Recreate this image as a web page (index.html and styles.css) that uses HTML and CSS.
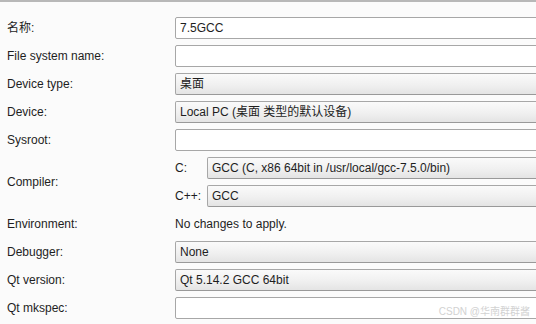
FILE: index.html
```html
<!DOCTYPE html>
<html lang="zh-cmn-Hans">
    <head>
        <meta charset="UTF-8">
        <title>Kit</title>
        <link rel="stylesheet" href="styles.css">
    </head>
    <body>
        <div class="panel">
            <div class="form">
                <div class="label">名称:</div>
                <div class="field edit">7.5GCC</div>

                <div class="label">File system name:</div>
                <div class="field edit"></div>

                <div class="label">Device type:</div>
                <div class="field combo">桌面</div>

                <div class="label">Device:</div>
                <div class="field combo">Local PC (桌面 类型的默认设备)</div>

                <div class="label">Sysroot:</div>
                <div class="field edit"></div>

                <div class="label compiler-label">Compiler:</div>
                <div class="compiler">
                    <div class="sub-label">C:</div>
                    <div class="field combo">GCC (C, x86 64bit in /usr/local/gcc-7.5.0/bin)</div>
                    <div class="sub-label">C++:</div>
                    <div class="field combo">GCC</div>
                </div>

                <div class="label">Environment:</div>
                <div class="plain">No changes to apply.</div>

                <div class="label">Debugger:</div>
                <div class="field combo">None</div>

                <div class="label">Qt version:</div>
                <div class="field combo">Qt 5.14.2 GCC 64bit</div>

                <div class="label">Qt mkspec:</div>
                <div class="field edit"></div>
            </div>
            <div class="watermark">CSDN @华南群群酱</div>
        </div>
    </body>
</html>
```

FILE: styles.css
```css
* {
    margin: 0;
    padding: 0;
    box-sizing: border-box;
}

body {
    width: 536px;
    height: 324px;
    overflow: hidden;
    background-color: #fbfbfb;
    color: #1e1e1e;
    font: 12px "Liberation Sans", "Noto Sans CJK SC", sans-serif;
}

.panel {
    position: relative;
    height: 100%;
    border-top: 2px solid #b8b8b8;
    padding: 15px 0 0 7px;
}

.form {
    display: grid;
    grid-template-columns: 168px 1fr;
    grid-auto-rows: 22px;
    row-gap: 6px;
    align-items: center;
}

.label {
    line-height: 22px;
}

.compiler-label {
    grid-row: span 2;
}

.compiler {
    grid-row: span 2;
    display: grid;
    grid-template-columns: 32px 1fr;
    grid-auto-rows: 22px;
    row-gap: 6px;
    align-items: center;
    align-self: stretch;
}

.sub-label {
    line-height: 22px;
}

/* 输入框和下拉框都伸出右边界 */
.field {
    height: 22px;
    width: calc(100% + 10px);
    border: 1px solid #a7a7a7;
    border-radius: 2px;
    padding: 0 4px;
    line-height: 20px;
    white-space: nowrap;
    overflow: hidden;
}

.edit {
    background-color: #fff;
}

.combo {
    border-bottom-color: #999;
    background-image: linear-gradient(#fafafa 0%, #f0f0f0 55%, #e4e4e4 100%);
}

.plain {
    line-height: 22px;
}

.watermark {
    position: absolute;
    right: 6px;
    bottom: 6px;
    color: #d2d2d2;
    font-size: 10px;
}
```
